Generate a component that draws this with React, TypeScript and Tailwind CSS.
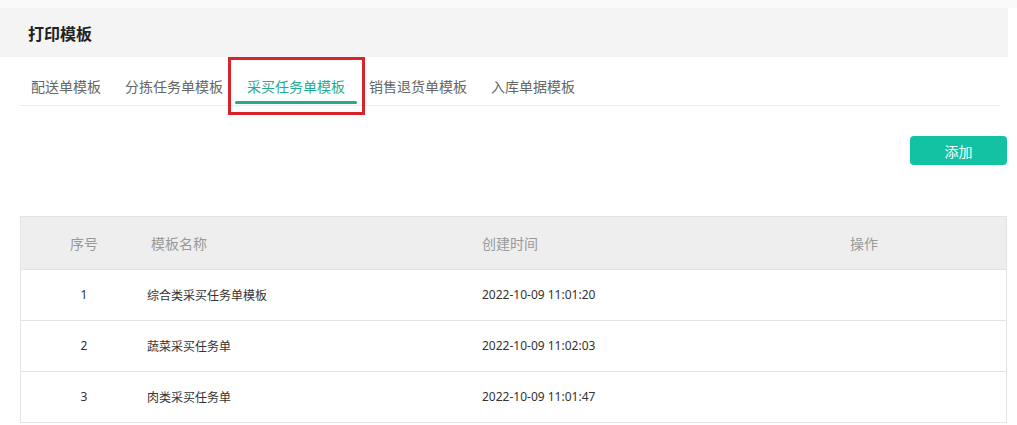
import React from 'react'

const tabs = ['配送单模板', '分拣任务单模板', '采买任务单模板', '销售退货单模板', '入库单据模板']

const rows = [
  { id: 1, name: '综合类采买任务单模板', time: '2022-10-09 11:01:20' },
  { id: 2, name: '蔬菜采买任务单', time: '2022-10-09 11:02:03' },
  { id: 3, name: '肉类采买任务单', time: '2022-10-09 11:01:47' },
]

const App = () => {
  return (
    <div className="w-[1017px] h-[425px] bg-white overflow-hidden font-['Noto_Sans_CJK_SC','Noto_Sans',sans-serif]">
      <div className="h-2 bg-[#f9f9f9]"></div>
      <div className="w-[1008px]">
        {/* Page title */}
        <div className="h-[49px] bg-[#f4f4f4] flex items-center pl-7">
          <h1 className="text-[16px] font-bold text-[#222] leading-none">打印模板</h1>
        </div>

        {/* Tabs */}
        <div className="relative ml-[19px] mr-2 flex h-[49px] pt-[10px] border-b border-[#eeeeee]">
          {tabs.map((t, i) => (
            <div
              key={t}
              className={`relative flex items-center px-3 text-[14px] ${i === 2 ? 'text-[#1fae92]' : 'text-[#666]'}`}
            >
              {t}
              {i === 2 && <div className="absolute left-0 right-0 bottom-[1px] h-[3px] rounded-full bg-[#29a88f]"></div>}
            </div>
          ))}
          {/* annotation box */}
          <div className="absolute left-[209px] top-0 w-[137px] h-[58px] border-[3px] border-[#d9222a] pointer-events-none"></div>
        </div>

        {/* Toolbar */}
        <div className="flex justify-end pt-[30px] pr-[1px]">
          <button className="w-[97px] h-[29px] rounded-[4px] bg-[#13c2a2] text-white text-[14px] leading-none">添加</button>
        </div>

        {/* Table */}
        <div className="ml-5 mr-[1px] mt-[51px] border-l border-r border-t border-[#e3e3e3]">
          <div className="grid grid-cols-[126px_335px_366px_1fr] h-[53px] items-center bg-[#eeeeee] border-b border-[#e3e3e3] text-[14px] text-[#999]">
            <div className="text-center">序号</div>
            <div className="pl-[4px]">模板名称</div>
            <div className="pl-0">创建时间</div>
            <div className="pl-[2px]">操作</div>
          </div>
          {rows.map((r) => (
            <div
              key={r.id}
              className="grid grid-cols-[126px_335px_366px_1fr] h-[51px] items-center border-b border-[#e3e3e3] text-[12px] text-[#333]"
            >
              <div className="text-center font-['Noto_Sans',sans-serif]">{r.id}</div>
              <div>{r.name}</div>
              <div className="font-['Noto_Sans',sans-serif]">{r.time}</div>
              <div></div>
            </div>
          ))}
        </div>
      </div>
    </div>
  )
}

export default App
